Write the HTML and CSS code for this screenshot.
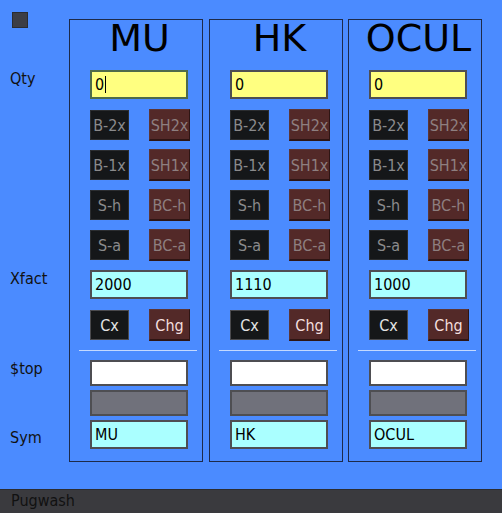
FILE: index.html
```html
<!DOCTYPE html>
<html>
<head>
<meta charset="utf-8">
<link rel="stylesheet" href="styles.css">
</head>
<body>
<div class="app">
  <div class="main">
    <div class="labels">
      <div class="checkbox"></div>
      <div class="label l-qty">Qty</div>
      <div class="label l-xfact">Xfact</div>
      <div class="label l-top">$top</div>
      <div class="label l-sym">Sym</div>
    </div>
    <div class="panels">
      <div class="panel">
        <div class="title">MU</div>
        <div class="field yellow focus">0<span class="caret"></span></div>
        <div class="row"><div class="btn dark">B-2x</div><div class="btn brown">SH2x</div></div>
        <div class="row"><div class="btn dark">B-1x</div><div class="btn brown">SH1x</div></div>
        <div class="row"><div class="btn dark">S-h</div><div class="btn brown">BC-h</div></div>
        <div class="row"><div class="btn dark">S-a</div><div class="btn brown">BC-a</div></div>
        <div class="field cyan xfact">2000</div>
        <div class="row cx-row"><div class="btn dark on">Cx</div><div class="btn brown on">Chg</div></div>
        <div class="sep"></div>
        <div class="field short white top-field"></div>
        <div class="field short gray"></div>
        <div class="field cyan sym">MU</div>
      </div>
      <div class="panel">
        <div class="title">HK</div>
        <div class="field yellow">0</div>
        <div class="row"><div class="btn dark">B-2x</div><div class="btn brown">SH2x</div></div>
        <div class="row"><div class="btn dark">B-1x</div><div class="btn brown">SH1x</div></div>
        <div class="row"><div class="btn dark">S-h</div><div class="btn brown">BC-h</div></div>
        <div class="row"><div class="btn dark">S-a</div><div class="btn brown">BC-a</div></div>
        <div class="field cyan xfact">1110</div>
        <div class="row cx-row"><div class="btn dark on">Cx</div><div class="btn brown on">Chg</div></div>
        <div class="sep"></div>
        <div class="field short white top-field"></div>
        <div class="field short gray"></div>
        <div class="field cyan sym">HK</div>
      </div>
      <div class="panel">
        <div class="title">OCUL</div>
        <div class="field yellow">0</div>
        <div class="row"><div class="btn dark">B-2x</div><div class="btn brown">SH2x</div></div>
        <div class="row"><div class="btn dark">B-1x</div><div class="btn brown">SH1x</div></div>
        <div class="row"><div class="btn dark">S-h</div><div class="btn brown">BC-h</div></div>
        <div class="row"><div class="btn dark">S-a</div><div class="btn brown">BC-a</div></div>
        <div class="field cyan xfact">1000</div>
        <div class="row cx-row"><div class="btn dark on">Cx</div><div class="btn brown on">Chg</div></div>
        <div class="sep"></div>
        <div class="field short white top-field"></div>
        <div class="field short gray"></div>
        <div class="field cyan sym">OCUL</div>
      </div>
    </div>
  </div>
  <div class="status">Pugwash</div>
</div>
</body>
</html>
```
FILE: styles.css
```css
html, body {
  margin: 0;
  padding: 0;
  height: 100%;
}
body {
  background: #4b8bff;
  font-family: "DejaVu Sans Condensed", "DejaVu Sans", sans-serif;
  font-size: 16px;
  color: #111;
  overflow: hidden;
}
.app {
  display: flex;
  flex-direction: column;
  height: 513px;
}
.main {
  flex: 1;
  display: flex;
}
.labels {
  width: 69px;
  display: flex;
  flex-direction: column;
  padding-left: 10px;
  box-sizing: border-box;
}
.checkbox {
  width: 14px;
  height: 14px;
  margin: 12px 0 0 2px;
  background: #3c3d44;
  border: 1px solid #2a2b30;
}
.label {
  line-height: 19px;
  height: 19px;
}
.l-qty { margin-top: 41px; }
.l-xfact { margin-top: 181px; }
.l-top { margin-top: 71px; }
.l-sym { margin-top: 50px; }

.panels {
  display: flex;
  gap: 6px;
  padding-top: 19px;
  align-items: flex-start;
}
.panel {
  width: 134px;
  height: 443px;
  box-sizing: border-box;
  border: 1px solid #1d2a4a;
  display: flex;
  flex-direction: column;
  padding-left: 20px;
}
.panel + .panel + .panel { margin-left: -1px; }
.title {
  font-family: "DejaVu Sans", sans-serif;
  font-size: 38px;
  line-height: 37px;
  height: 37px;
  text-align: center;
  margin-left: -13px;
  color: #000;
  white-space: nowrap;
}
.field {
  width: 98px;
  height: 29px;
  box-sizing: border-box;
  border: 2px solid #4e4e52;
  line-height: 25px;
  padding-left: 3px;
  color: #000;
  display: flex;
  align-items: center;
}
.yellow { background: #ffff80; margin-top: 13px; }
.yellow.focus { border-color: #4f6b4a; }
.cyan { background: #aaffff; }
.white { background: #ffffff; }
.gray { background: #70717b; }
.short { height: 26px; }
.caret {
  display: inline-block;
  width: 1px;
  height: 17px;
  background: #000;
  margin-left: 1px;
}
.row {
  display: flex;
  align-items: center;
  height: 32px;
  margin-top: 8px;
}
.yellow + .row { margin-top: 10px; }
.btn {
  box-sizing: border-box;
  display: flex;
  align-items: center;
  justify-content: center;
  padding-top: 1px;
  line-height: 19px;
}
.dark {
  width: 39px;
  height: 30px;
  background: #151719;
  border: 1px solid #2b2d30;
  color: #8a8a8c;
}
.brown {
  width: 41px;
  height: 32px;
  margin-left: 20px;
  background: #532928;
  border: 1px solid #5e3534;
  border-right-color: #2e1514;
  border-bottom: 2px solid #2e1514;
  color: #8e7f80;
}
.dark.on { color: #e4e4e4; border-color: #4a4a4e; }
.brown.on { color: #f2dede; }
.xfact { margin-top: 9px; }
.cx-row { margin-top: 10px; }
.sep {
  height: 1px;
  width: 118px;
  margin: 9px 0 0 -11px;
  background: #c4d9ff;
}
.top-field { margin-top: 9px; }
.gray { margin-top: 4px; }
.sym { margin-top: 4px; }

.status {
  height: 24px;
  box-sizing: border-box;
  background: #3a3a3e;
  border-top: 1px solid #2c2c30;
  padding-left: 11px;
  line-height: 22px;
  color: #111;
}
```
